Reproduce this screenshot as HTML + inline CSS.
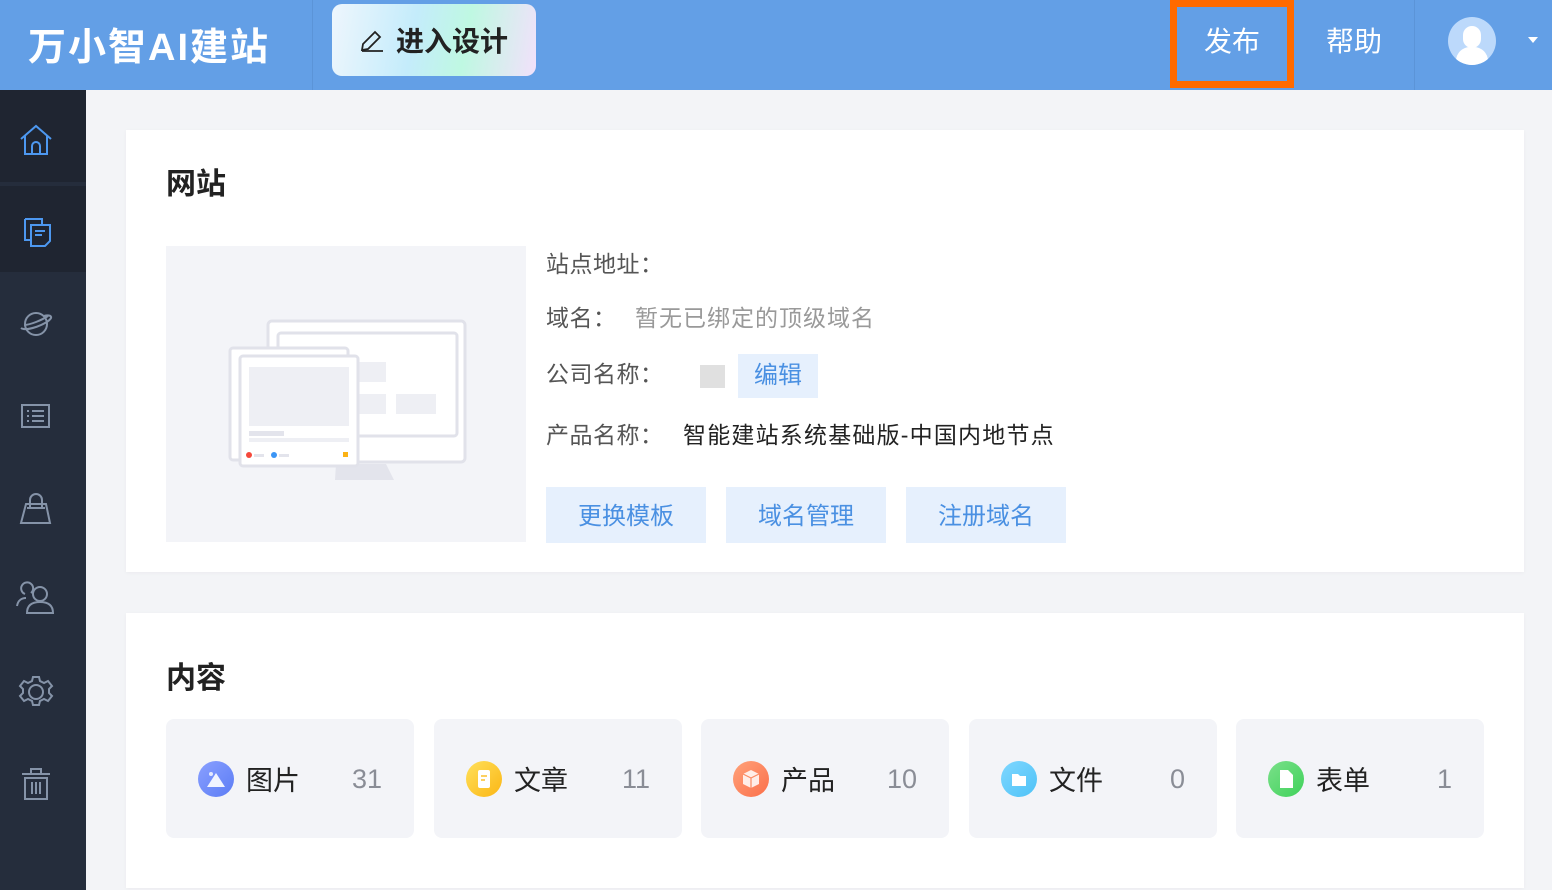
<!DOCTYPE html><html><head><meta charset="utf-8"><style>
*{margin:0;padding:0;box-sizing:border-box}
body{width:1552px;height:890px;overflow:hidden;background:#f3f4f7;font-family:"Liberation Sans","Noto Sans CJK SC",sans-serif;position:relative}
.hd{position:absolute;left:0;top:0;width:1552px;height:90px;background:#639fe6}
.abs{position:absolute}
.sb{position:absolute;left:0;top:90px;width:86px;height:800px;background:#252d3c}
.card{position:absolute;left:126px;width:1398px;background:#fff;box-shadow:0 1px 4px rgba(0,0,0,.04)}
.lbl{position:absolute;left:546px;font-size:23px;color:#555;letter-spacing:0.5px}
.btn{position:absolute;top:487px;width:160px;height:56px;background:#e6f0fd;color:#4a90e2;font-size:24px;text-align:center;line-height:60px}
.st{position:absolute;top:719px;width:248px;height:119px;background:#f3f4f8;border-radius:8px}
.st .ic{position:absolute;left:32px;top:42px;width:36px;height:36px;border-radius:50%}
.st .ic svg{position:absolute;left:0;top:0}
.st .t{position:absolute;left:80px;top:40px;font-size:27px;color:#222}
.st .n{position:absolute;right:32px;top:45px;font-size:27px;color:#8a8d96}
</style></head><body>
<div class="hd">
 <div class="abs" style="left:28px;top:16px;font-size:38px;font-weight:bold;color:#fff;letter-spacing:2px">万小智AI建站</div>
 <div class="abs" style="left:312px;top:0;width:1px;height:90px;background:#5b94d8"></div>
 <div class="abs" style="left:332px;top:4px;width:204px;height:72px;border-radius:10px;background:linear-gradient(100deg,#eef6fd,#c4ecfb 40%,#bff8e2 65%,#f2e1fb)"></div>
 <svg class="abs" style="left:359px;top:28px" width="26" height="26" viewBox="0 0 26 26" fill="none" stroke="#222" stroke-width="1.8"><path d="M3 22 L4 16 L16 4 L21 9 L9 21 Z"/><path d="M3 23 H24"/></svg>
 <div class="abs" style="left:396px;top:20px;font-size:28px;font-weight:bold;color:#222">进入设计</div>
 <div class="abs" style="left:1170px;top:0;width:124px;height:88px;border:7px solid #ff6a00"></div>
 <div class="abs" style="left:1204px;top:20px;font-size:28px;color:#fff">发布</div>
 <div class="abs" style="left:1326px;top:20px;font-size:28px;color:#fff">帮助</div>
 <div class="abs" style="left:1414px;top:0;width:1px;height:90px;background:#5b94d8"></div>
 <div class="abs" style="left:1448px;top:17px;width:48px;height:48px;border-radius:50%;background:#bcd9fb;overflow:hidden">
  <div class="abs" style="left:15px;top:9px;width:18px;height:22px;border-radius:9px;background:#fff"></div>
  <div class="abs" style="left:8px;top:30px;width:32px;height:22px;border-radius:14px 14px 0 0;background:#fff"></div>
 </div>
 <div class="abs" style="left:1528px;top:37px;border:5px solid transparent;border-top:6px solid #fff"></div>
</div>
<div class="sb">
 <div class="abs" style="left:0;top:0;width:86px;height:92px;background:#1f2531"></div>
 <div class="abs" style="left:0;top:96px;width:86px;height:86px;background:#1f2531"></div>
 <svg class="abs" style="left:18px;top:32px" width="36" height="36" viewBox="0 0 36 36" fill="none" stroke="#4d98f0" stroke-width="2"><path d="M3 17 L18 4 L33 17"/><path d="M7 14 V32 H29 V14"/><path d="M14 32 V24 a4 4 0 0 1 8 0 V32"/></svg>
 <svg class="abs" style="left:20px;top:124px" width="34" height="34" viewBox="0 0 34 34" fill="none" stroke="#4d98f0" stroke-width="2"><path d="M5 5 H22 V10 M5 5 V26 H10"/><path d="M11 11 H30 V27 L25 32 H11 Z"/><path d="M15 17 H25 M15 21 H22"/></svg>
 <svg class="abs" style="left:18px;top:216px" width="36" height="36" viewBox="0 0 36 36" fill="none" stroke="#8593a8" stroke-width="2"><circle cx="18" cy="18" r="11"/><path d="M3 22 C8 26 30 18 33 12 C34 9 29 9 26 10"/><path d="M6 19 C12 19 24 14 30 10"/></svg>
 <svg class="abs" style="left:20px;top:312px" width="32" height="30" viewBox="0 0 32 30" fill="none" stroke="#8593a8" stroke-width="2"><rect x="2" y="3" width="27" height="22"/><path d="M7 9h2M12 9h12M7 14h2M12 14h12M7 19h2M12 19h12"/></svg>
 <svg class="abs" style="left:18px;top:400px" width="36" height="36" viewBox="0 0 36 36" fill="none" stroke="#8593a8" stroke-width="2"><path d="M8 14 H28 L32 33 H3 Z"/><path d="M12 18 V10 a6 6 0 0 1 12 0 V18"/><path d="M9 18 H27"/></svg>
 <svg class="abs" style="left:15px;top:490px" width="40" height="36" viewBox="0 0 40 36" fill="none" stroke="#8593a8" stroke-width="2"><path d="M10 14 a6 6 0 1 1 6 -1 M2 26 C3 20 7 18 11 18"/><circle cx="25" cy="14" r="7"/><path d="M12 33 C12 25 17 22 25 22 C33 22 38 25 38 33 Z"/></svg>
 <svg class="abs" style="left:18px;top:584px" width="36" height="36" viewBox="0 0 36 36" fill="none" stroke="#8593a8" stroke-width="2"><circle cx="18" cy="18" r="7"/><path d="M15 3h6l1 4 4 2 4-2 4 5-3 3v4l3 3-4 5-4-2-4 2-1 4h-6l-1-4-4-2-4 2-4-5 3-3v-4l-3-3 4-5 4 2 4-2z"/></svg>
 <svg class="abs" style="left:20px;top:676px" width="32" height="36" viewBox="0 0 32 36" fill="none" stroke="#8593a8" stroke-width="2"><path d="M2 8 H30 M11 8 V3 H21 V8"/><path d="M5 12 H27 V33 H5 Z"/><path d="M12 16 V28 M16 16 V28 M20 16 V28"/></svg>
</div>
<div class="card" style="top:130px;height:442px">
 <div class="abs" style="left:40px;top:29px;font-size:30px;font-weight:bold;color:#222">网站</div>
 <div class="abs" style="left:40px;top:116px;width:360px;height:296px;background:#f3f4f8">
  <svg width="360" height="296" viewBox="0 0 360 296">
   <path d="M170 218 H220 L228 234 H169 Z" fill="#e3e4ec"/>
   <rect x="102" y="75" width="197" height="141" rx="4" fill="#fff" stroke="#e1e2ea" stroke-width="3"/>
   <rect x="112" y="87" width="179" height="103" rx="3" fill="#fff" stroke="#e1e2ea" stroke-width="3"/>
   <rect x="190" y="116" width="30" height="20" fill="#eeeff4"/><rect x="190" y="148" width="30" height="20" fill="#eeeff4"/><rect x="230" y="148" width="40" height="20" fill="#eeeff4"/>
   <rect x="64" y="102" width="118" height="112" rx="3" fill="#fff" stroke="#e1e2ea" stroke-width="3"/>
   <rect x="74" y="110" width="118" height="110" rx="3" fill="#fff" stroke="#e1e2ea" stroke-width="3"/>
   <rect x="83" y="121" width="100" height="59" fill="#eeeff4"/>
   <rect x="83" y="185" width="35" height="5" fill="#e3e4ec"/><rect x="83" y="192" width="100" height="4" fill="#eeeff4"/>
   <circle cx="83" cy="209" r="3" fill="#f5483b"/><rect x="88" y="208" width="10" height="3" fill="#e3e4ec"/>
   <circle cx="108" cy="209" r="3" fill="#3b95f5"/><rect x="113" y="208" width="10" height="3" fill="#e3e4ec"/>
   <rect x="177" y="206" width="5" height="5" fill="#fbb215"/>
  </svg>
 </div>
</div>
<div class="lbl" style="top:245px">站点地址：</div>
<div class="lbl" style="top:299px">域名：</div>
<div class="abs" style="left:635px;top:299px;font-size:23px;color:#999;letter-spacing:1px">暂无已绑定的顶级域名</div>
<div class="lbl" style="top:355px">公司名称：</div>
<div class="abs" style="left:700px;top:365px;width:25px;height:23px;background:#e0e0e0"></div>
<div class="abs" style="left:738px;top:354px;width:80px;height:44px;background:#e6f0fd;color:#4a90e2;font-size:24px;text-align:center;line-height:44px">编辑</div>
<div class="lbl" style="top:416px">产品名称：</div>
<div class="abs" style="left:683px;top:416px;font-size:23px;color:#222;letter-spacing:1.2px">智能建站系统基础版-中国内地节点</div>
<div class="btn" style="left:546px">更换模板</div>
<div class="btn" style="left:726px">域名管理</div>
<div class="btn" style="left:906px">注册域名</div>
<div class="card" style="top:613px;height:275px">
 <div class="abs" style="left:40px;top:40px;font-size:30px;font-weight:bold;color:#222">内容</div>
</div>
<div class="st" style="left:166px"><div class="ic" style="background:linear-gradient(135deg,#8aa0ff,#5b7cf5)"><svg width="36" height="36"><circle cx="13" cy="13" r="2" fill="#fff" opacity=".8"/><path d="M9 26 L18 12 L27 26 Z" fill="#fff" opacity=".9"/></svg></div><div class="t">图片</div><div class="n">31</div></div>
<div class="st" style="left:434px"><div class="ic" style="background:linear-gradient(135deg,#ffe05a,#fbb615)"><svg width="36" height="36"><rect x="12" y="9" width="12" height="18" rx="2" fill="#fff"/><path d="M15 15h6M15 19h4" stroke="#fbc02d" stroke-width="1.5"/></svg></div><div class="t">文章</div><div class="n">11</div></div>
<div class="st" style="left:701px"><div class="ic" style="background:linear-gradient(135deg,#ffa27a,#fb6f4a)"><svg width="36" height="36"><path d="M18 9 L26 13 V23 L18 27 L10 23 V13 Z" fill="#fff" opacity=".85"/><path d="M10 13 L18 17 L26 13 M18 17 V27" stroke="#fb8a62" stroke-width="1.2" fill="none"/></svg></div><div class="t">产品</div><div class="n">10</div></div>
<div class="st" style="left:969px"><div class="ic" style="background:linear-gradient(135deg,#7fd7ff,#4ec2f7)"><svg width="36" height="36"><path d="M11 13 H17 L19 15 H25 V25 H11 Z" fill="#fff"/></svg></div><div class="t">文件</div><div class="n">0</div></div>
<div class="st" style="left:1236px"><div class="ic" style="background:linear-gradient(135deg,#7be08a,#3fd25a)"><svg width="36" height="36"><path d="M12 9 H20 L25 14 V27 H12 Z" fill="#fff"/></svg></div><div class="t">表单</div><div class="n">1</div></div>
</body></html>
